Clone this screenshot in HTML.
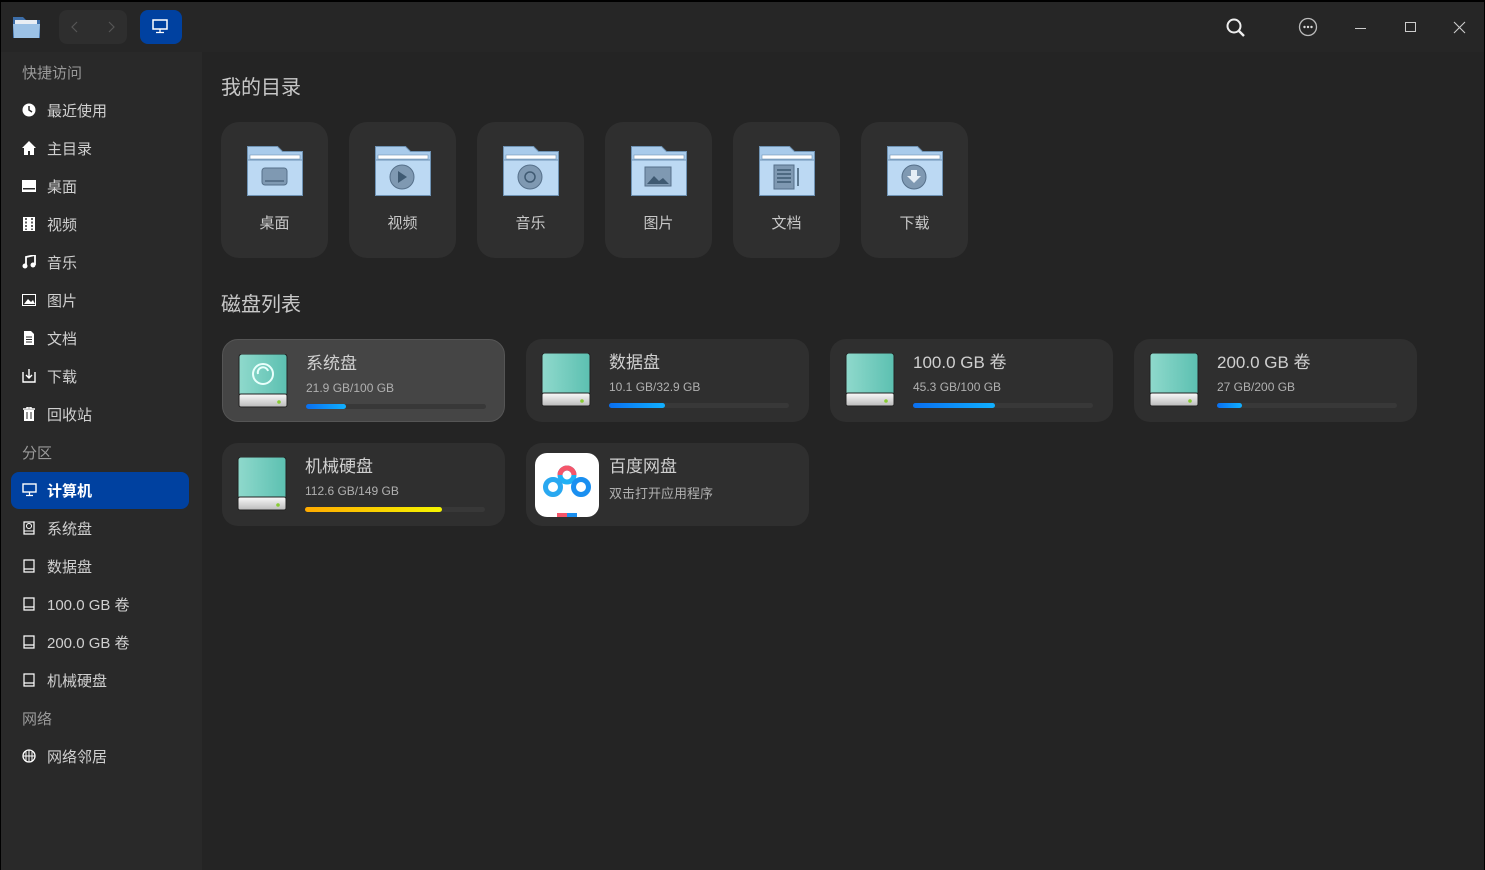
<!DOCTYPE html>
<html><head><meta charset="utf-8"><style>
*{margin:0;padding:0;box-sizing:border-box}
body{width:1485px;height:870px;background:#000;font-family:"Liberation Sans","Noto Sans CJK SC",sans-serif;overflow:hidden;position:relative;color:#c0c0c0}
.win{position:absolute;left:1px;top:2px;width:1483px;height:868px;background:#242424}
.title{position:absolute;left:0;top:0;width:1483px;height:50px;background:#262626}
.side{position:absolute;left:0;top:50px;width:201px;height:818px;background:#292929}
.sh{position:absolute;left:21px;font-size:15px;color:#9a9a9a;margin-top:-2px}
.si{position:absolute;left:10px;width:178px;height:37px;border-radius:8px;font-size:15px;color:#d0d0d0}
.si span{position:absolute;left:36px;top:8px}
.si svg{position:absolute;left:11px;top:11px}
.si.act{background:#0041a0;color:#fff;font-weight:bold}
.h2{position:absolute;left:220px;font-size:20px;color:#c8c8c8;margin-top:-4px}
.fc{position:absolute;top:120px;width:107px;height:136px;background:#2f2f2f;border-radius:18px}
.fc .lb{position:absolute;top:90px;width:100%;text-align:center;font-size:15px;color:#c8c8c8}
.fc svg{position:absolute;left:26px;top:24px}
.dc{position:absolute;width:283px;height:83px;background:#2f2f2f;border-radius:16px}
.dc.sel{background:#454545;border:1px solid #555}
.dc .nm{position:absolute;left:83px;top:9px;font-size:17px;color:#d0d0d0}
.dc .sz{position:absolute;left:83px;top:41px;font-size:12px;color:#b0b0b0}
.dc .bar{position:absolute;left:83px;top:64px;width:180px;height:5px;border-radius:3px;background:#383838}
.dc .bar i{position:absolute;left:0;top:0;height:5px;border-radius:3px;background:linear-gradient(90deg,#0a6ff0,#10b0ff)}
.dc svg.hd{position:absolute;left:15px;top:14px}
</style></head><body>
<div class="win">
<div class="title">
 <svg style="position:absolute;left:11px;top:12px" width="30" height="26" viewBox="0 0 30 26"><path d="M1 3h10l3 3h14v18H1z" fill="#3d6ea8"/><rect x="3" y="6" width="22" height="8" fill="#e8eef4"/><path d="M1 10h27l-1 14H2z" fill="#9cc2e6"/></svg>
 <div style="position:absolute;left:58px;top:8px;width:68px;height:34px;background:#2e2e2e;border-radius:8px"></div>
 <svg style="position:absolute;left:70px;top:19px" width="8" height="12"><path d="M6 1L1 6l5 5" stroke="#555" fill="none" stroke-width="1.2"/></svg>
 <svg style="position:absolute;left:106px;top:19px" width="8" height="12"><path d="M2 1l5 5-5 5" stroke="#555" fill="none" stroke-width="1.2"/></svg>
 <div style="position:absolute;left:139px;top:8px;width:42px;height:34px;background:#0041a0;border-radius:8px"></div>
 <svg style="position:absolute;left:151px;top:17px" width="16" height="15"><rect x="1" y="1" width="14" height="9" fill="none" stroke="#fff" stroke-width="1.5"/><path d="M8 10v3M4 13.5h8" stroke="#fff" stroke-width="1.3"/></svg>
 <svg style="position:absolute;left:1224px;top:15px" width="22" height="22"><circle cx="9" cy="9" r="6.5" fill="none" stroke="#eee" stroke-width="2"/><path d="M14 14l5 5" stroke="#eee" stroke-width="2.4"/></svg>
 <svg style="position:absolute;left:1297px;top:15px" width="22" height="22"><circle cx="10" cy="10" r="8.5" fill="none" stroke="#bbb" stroke-width="1.3"/><circle cx="6.5" cy="10" r="1.2" fill="#ddd"/><circle cx="10" cy="10" r="1.2" fill="#ddd"/><circle cx="13.5" cy="10" r="1.2" fill="#ddd"/></svg>
 <div style="position:absolute;left:1354px;top:26px;width:11px;height:1px;background:#ccc"></div>
 <div style="position:absolute;left:1404px;top:20px;width:11px;height:10px;border:1px solid #ccc"></div>
 <svg style="position:absolute;left:1452px;top:19px" width="13" height="13"><path d="M1 1l11 11M12 1L1 12" stroke="#ccc" stroke-width="1.1"/></svg>
</div>
<div class="side">
 <div class="sh" style="top:12px">快捷访问</div>
 <div class="si" style="top:40px"><svg width="14" height="14"><circle cx="7" cy="7" r="6.5" fill="#fff"/><path d="M7 3v4l3 2" stroke="#292929" stroke-width="1.5" fill="none"/></svg><span>最近使用</span></div>
 <div class="si" style="top:78px"><svg width="14" height="14"><path d="M7 0L0 7h2v7h4v-4h2v4h4V7h2z" fill="#fff"/></svg><span>主目录</span></div>
 <div class="si" style="top:116px"><svg width="14" height="14"><rect x="0" y="1" width="14" height="12" fill="#fff"/><rect x="1" y="9" width="12" height="1.5" fill="#292929"/></svg><span>桌面</span></div>
 <div class="si" style="top:154px"><svg width="14" height="14"><rect x="1" y="0" width="12" height="14" fill="#fff"/><path d="M4 1v12M10 1v12" stroke="#292929" stroke-width="1.5" stroke-dasharray="2 1.5"/></svg><span>视频</span></div>
 <div class="si" style="top:192px"><svg width="14" height="14"><path d="M4 11V2l9-2v10" stroke="#fff" stroke-width="1.8" fill="none"/><circle cx="3" cy="11" r="2.5" fill="#fff"/><circle cx="11" cy="10" r="2.5" fill="#fff"/></svg><span>音乐</span></div>
 <div class="si" style="top:230px"><svg width="14" height="14"><rect x="0.5" y="1.5" width="13" height="11" fill="none" stroke="#fff"/><path d="M2 11l4-5 3 3 2-2 2 4z" fill="#fff"/></svg><span>图片</span></div>
 <div class="si" style="top:268px"><svg width="14" height="14"><path d="M2 0h7l3 3v11H2z" fill="#fff"/><path d="M4 6h6M4 8.5h6M4 11h6" stroke="#292929"/></svg><span>文档</span></div>
 <div class="si" style="top:306px"><svg width="14" height="14"><path d="M1 3v10h12V3" stroke="#fff" stroke-width="1.4" fill="none"/><path d="M7 0v9M4 6l3 3 3-3" stroke="#fff" stroke-width="1.4" fill="none"/></svg><span>下载</span></div>
 <div class="si" style="top:344px"><svg width="14" height="14"><path d="M1 2h12M5 2V0h4v2" stroke="#fff" stroke-width="1.4" fill="none"/><path d="M2 3h10v11H2z" fill="#fff"/><path d="M5 5v7M9 5v7" stroke="#292929"/></svg><span>回收站</span></div>
 <div class="sh" style="top:392px">分区</div>
 <div class="si act" style="top:420px"><svg width="15" height="14"><rect x="1" y="1" width="13" height="8" fill="none" stroke="#fff" stroke-width="1.4"/><path d="M7.5 9v3M4 12.5h7" stroke="#fff" stroke-width="1.2"/></svg><span>计算机</span></div>
 <div class="si" style="top:458px"><svg width="14" height="14"><path d="M2 1h10v12H2z" fill="none" stroke="#fff" stroke-width="1.2"/><path d="M2 10h10" stroke="#fff"/><circle cx="7" cy="5" r="2.5" fill="none" stroke="#fff"/></svg><span>系统盘</span></div>
 <div class="si" style="top:496px"><svg width="14" height="14"><path d="M2 1h10v12H2zM2 10h10" fill="none" stroke="#fff" stroke-width="1.2"/></svg><span>数据盘</span></div>
 <div class="si" style="top:534px"><svg width="14" height="14"><path d="M2 1h10v12H2zM2 10h10" fill="none" stroke="#fff" stroke-width="1.2"/></svg><span>100.0 GB 卷</span></div>
 <div class="si" style="top:572px"><svg width="14" height="14"><path d="M2 1h10v12H2zM2 10h10" fill="none" stroke="#fff" stroke-width="1.2"/></svg><span>200.0 GB 卷</span></div>
 <div class="si" style="top:610px"><svg width="14" height="14"><path d="M2 1h10v12H2zM2 10h10" fill="none" stroke="#fff" stroke-width="1.2"/></svg><span>机械硬盘</span></div>
 <div class="sh" style="top:658px">网络</div>
 <div class="si" style="top:686px"><svg width="14" height="14"><circle cx="7" cy="7" r="6" fill="none" stroke="#fff" stroke-width="1.3"/><path d="M1 7h12M7 1v12M4 2.5v9M10 2.5v9" stroke="#fff"/></svg><span>网络邻居</span></div>
</div>

<div class="h2" style="top:73px">我的目录</div>
<div class="h2" style="top:290px">磁盘列表</div>

<div class="fc" style="left:220px"><svg width="56" height="50"><path d="M0.5 0.5h30l5 5h20v44H0.5z" fill="#a9cbeb" stroke="#6f93b4"/><rect x="3" y="9" width="50" height="4" fill="#fff" stroke="#6f93b4" stroke-width=".6"/><path d="M0.5 14h55v35.5H0.5z" fill="#bcd9f3" stroke="#6f93b4"/><rect x="15" y="22" width="25" height="17" rx="3" fill="#7f99b2" stroke="#56708a"/><rect x="18" y="34" width="19" height="2" fill="#5a738c"/></svg><div class="lb">桌面</div></div>
<div class="fc" style="left:348px"><svg width="56" height="50"><path d="M0.5 0.5h30l5 5h20v44H0.5z" fill="#a9cbeb" stroke="#6f93b4"/><rect x="3" y="9" width="50" height="4" fill="#fff" stroke="#6f93b4" stroke-width=".6"/><path d="M0.5 14h55v35.5H0.5z" fill="#bcd9f3" stroke="#6f93b4"/><circle cx="27" cy="31" r="12" fill="#7f99b2" stroke="#56708a"/><path d="M23 25v12l9-6z" fill="#3f5a72"/></svg><div class="lb">视频</div></div>
<div class="fc" style="left:476px"><svg width="56" height="50"><path d="M0.5 0.5h30l5 5h20v44H0.5z" fill="#a9cbeb" stroke="#6f93b4"/><rect x="3" y="9" width="50" height="4" fill="#fff" stroke="#6f93b4" stroke-width=".6"/><path d="M0.5 14h55v35.5H0.5z" fill="#bcd9f3" stroke="#6f93b4"/><circle cx="27" cy="31" r="12" fill="#7f99b2" stroke="#56708a"/><circle cx="27" cy="31" r="5" fill="none" stroke="#3f5a72" stroke-width="1.5"/></svg><div class="lb">音乐</div></div>
<div class="fc" style="left:604px"><svg width="56" height="50"><path d="M0.5 0.5h30l5 5h20v44H0.5z" fill="#a9cbeb" stroke="#6f93b4"/><rect x="3" y="9" width="50" height="4" fill="#fff" stroke="#6f93b4" stroke-width=".6"/><path d="M0.5 14h55v35.5H0.5z" fill="#bcd9f3" stroke="#6f93b4"/><rect x="14" y="21" width="26" height="19" fill="#7f99b2" stroke="#56708a"/><path d="M16 38l7-8 5 5 4-3 6 6z" fill="#3f5a72"/></svg><div class="lb">图片</div></div>
<div class="fc" style="left:732px"><svg width="56" height="50"><path d="M0.5 0.5h30l5 5h20v44H0.5z" fill="#a9cbeb" stroke="#6f93b4"/><rect x="3" y="9" width="50" height="4" fill="#fff" stroke="#6f93b4" stroke-width=".6"/><path d="M0.5 14h55v35.5H0.5z" fill="#bcd9f3" stroke="#6f93b4"/><rect x="15" y="19" width="20" height="24" fill="#7f99b2" stroke="#56708a"/><path d="M18 24h14M18 28h14M18 32h14M18 36h14M39 22v18" stroke="#3f5a72" stroke-width="1.5"/></svg><div class="lb">文档</div></div>
<div class="fc" style="left:860px"><svg width="56" height="50"><path d="M0.5 0.5h30l5 5h20v44H0.5z" fill="#a9cbeb" stroke="#6f93b4"/><rect x="3" y="9" width="50" height="4" fill="#fff" stroke="#6f93b4" stroke-width=".6"/><path d="M0.5 14h55v35.5H0.5z" fill="#bcd9f3" stroke="#6f93b4"/><circle cx="27" cy="31" r="12" fill="#7f99b2" stroke="#56708a"/><path d="M24 24h6v6h4l-7 7-7-7h4z" fill="#e5eef6"/></svg><div class="lb">下载</div></div>

<svg width="0" height="0" style="position:absolute"><defs><linearGradient id="tg" x1="0" x2="1"><stop offset="0" stop-color="#8fd9cc"/><stop offset="1" stop-color="#5cc0b1"/></linearGradient><linearGradient id="bg" x1="0" y1="0" y2="1" x2="0"><stop offset="0" stop-color="#fafafa"/><stop offset="1" stop-color="#bbb"/></linearGradient></defs></svg>
<div class="dc sel" style="left:221px;top:337px"><svg class="hd" width="52" height="56"><rect x="1" y="0" width="48" height="42" rx="3" fill="url(#tg)" stroke="#222"/><rect x="1" y="40" width="48" height="13" rx="2" fill="url(#bg)" stroke="#222"/><circle cx="41" cy="48" r="1.8" fill="#8c3"/><circle cx="25" cy="20" r="10" fill="none" stroke="#e8fffb" stroke-width="2"/><path d="M20 20a5 5 0 0 1 10 -3" stroke="#e8fffb" stroke-width="2" fill="none"/></svg><div class="nm">系统盘</div><div class="sz">21.9 GB/100 GB</div><div class="bar"><i style="width:40px"></i></div></div>
<div class="dc" style="left:525px;top:337px"><svg class="hd" width="52" height="56"><rect x="1" y="0" width="48" height="42" rx="3" fill="url(#tg)" stroke="#222"/><rect x="1" y="40" width="48" height="13" rx="2" fill="url(#bg)" stroke="#222"/><circle cx="41" cy="48" r="1.8" fill="#8c3"/></svg><div class="nm">数据盘</div><div class="sz">10.1 GB/32.9 GB</div><div class="bar"><i style="width:56px"></i></div></div>
<div class="dc" style="left:829px;top:337px"><svg class="hd" width="52" height="56"><rect x="1" y="0" width="48" height="42" rx="3" fill="url(#tg)" stroke="#222"/><rect x="1" y="40" width="48" height="13" rx="2" fill="url(#bg)" stroke="#222"/><circle cx="41" cy="48" r="1.8" fill="#8c3"/></svg><div class="nm">100.0 GB 卷</div><div class="sz">45.3 GB/100 GB</div><div class="bar"><i style="width:82px"></i></div></div>
<div class="dc" style="left:1133px;top:337px"><svg class="hd" width="52" height="56"><rect x="1" y="0" width="48" height="42" rx="3" fill="url(#tg)" stroke="#222"/><rect x="1" y="40" width="48" height="13" rx="2" fill="url(#bg)" stroke="#222"/><circle cx="41" cy="48" r="1.8" fill="#8c3"/></svg><div class="nm">200.0 GB 卷</div><div class="sz">27 GB/200 GB</div><div class="bar"><i style="width:25px"></i></div></div>
<div class="dc" style="left:221px;top:441px"><svg class="hd" width="52" height="56"><rect x="1" y="0" width="48" height="42" rx="3" fill="url(#tg)" stroke="#222"/><rect x="1" y="40" width="48" height="13" rx="2" fill="url(#bg)" stroke="#222"/><circle cx="41" cy="48" r="1.8" fill="#8c3"/></svg><div class="nm">机械硬盘</div><div class="sz">112.6 GB/149 GB</div><div class="bar"><i style="width:137px;background:linear-gradient(90deg,#ffaa00,#f5f500)"></i></div></div>
<div class="dc" style="left:525px;top:441px"><svg style="position:absolute;left:9px;top:10px" width="64" height="64"><rect width="64" height="64" rx="12" fill="#fff"/><circle cx="32" cy="22" r="7" fill="none" stroke="#1fb0f5" stroke-width="5"/><path d="M25 22a7 7 0 0 1 14 0" fill="none" stroke="#f5566a" stroke-width="5"/><circle cx="18" cy="34" r="7.5" fill="none" stroke="#29a8f0" stroke-width="5"/><circle cx="46" cy="34" r="7.5" fill="none" stroke="#1a8ff0" stroke-width="5"/><rect x="22" y="60" width="10" height="4" fill="#f5566a"/><rect x="32" y="60" width="10" height="4" fill="#1a8ff0"/></svg><div class="nm">百度网盘</div><div class="sz" style="font-size:13px;top:40px">双击打开应用程序</div></div>
</div>
</body></html>
